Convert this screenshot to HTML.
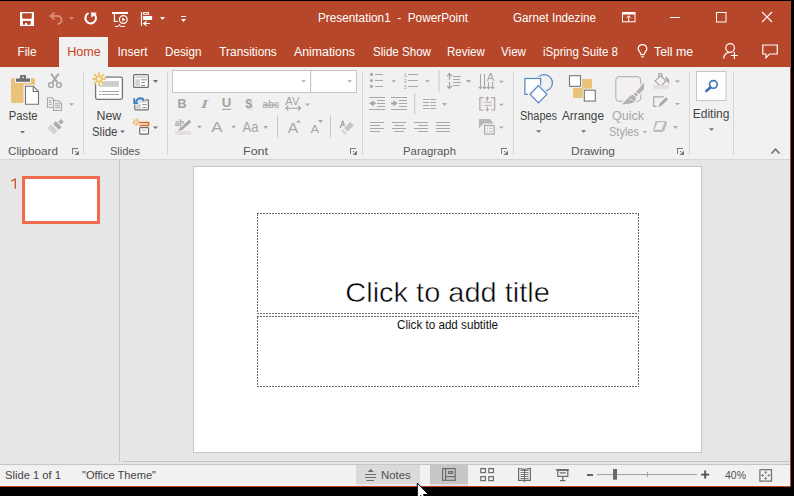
<!DOCTYPE html>
<html><head><meta charset="utf-8">
<style>
*{margin:0;padding:0}
html,body{width:794px;height:496px;overflow:hidden;background:#000}
svg{position:absolute;left:0;top:0;font-family:"Liberation Sans",sans-serif}
.w{fill:#fff}
.lab{fill:#444}
.dis{fill:#A6A6A6}
</style></head><body>
<svg width="794" height="496" viewBox="0 0 794 496">
<!-- frame -->
<rect x="0" y="0" width="794" height="496" fill="#000"/>
<rect x="0" y="1" width="791" height="486" fill="#B7472A"/>
<!-- ribbon -->
<rect x="0" y="67" width="790" height="92" fill="#F1F1F1"/>
<rect x="0" y="159" width="790" height="1" fill="#D5D5D5"/>
<!-- main -->
<rect x="0" y="160" width="790" height="304" fill="#E6E6E6"/>
<rect x="0" y="464" width="790" height="1" fill="#C6C6C6"/>
<rect x="0" y="465" width="790" height="21" fill="#F1F1F1"/>

<!-- ===== TITLE BAR ===== -->
<g id="titlebar">
<text x="318" y="22" font-size="12.5" class="w" xml:space="preserve" textLength="150" lengthAdjust="spacingAndGlyphs">Presentation1  -  PowerPoint</text>
<text x="513" y="22" font-size="12.5" class="w" textLength="83" lengthAdjust="spacingAndGlyphs">Garnet Indezine</text>
</g>

<g id="qat">
<rect x="20" y="12" width="14" height="14" fill="#fff"/>
<path d="M22.2 13.3H31.8V18L31 18.7H23L22.2 18Z" fill="#B7472A"/>
<rect x="22.9" y="20.9" width="7.8" height="3.8" fill="#B7472A"/>
<rect x="25" y="23" width="2" height="2" fill="#fff"/>
<g fill="none" stroke="#D98A74" stroke-width="2">
<path d="M50.5 16H57.5A4 4 0 0 1 57.5 24"/>
<path d="M54.6 12.4L50.5 16L54.6 19.6"/>
</g>
<path d="M69 17H74L71.5 20Z" fill="#D98A74"/>
<path d="M88.6 13.2A5.3 5.3 0 1 0 94.6 14.5" fill="none" stroke="#fff" stroke-width="2"/>
<path d="M91 12.2L96.9 12.8L91.5 17.8Z" fill="#fff"/>
<rect x="112" y="12" width="16" height="2" fill="#fff"/>
<rect x="113.8" y="13.8" width="1.3" height="8" fill="#fff"/>
<rect x="113.8" y="20.8" width="4" height="1.2" fill="#fff"/>
<circle cx="123.3" cy="19.5" r="3.9" fill="none" stroke="#fff" stroke-width="1.2"/>
<path d="M122.2 17.4V21.4L125.5 19.4Z" fill="#fff"/>
<path d="M115 26.4H118.5L119.5 24.5L120.5 26.4H125" fill="none" stroke="#fff" stroke-width="1"/>
<rect x="140.9" y="12" width="1.2" height="14" fill="#fff"/>
<rect x="143.6" y="12.6" width="5" height="1.7" fill="none" stroke="#fff" stroke-width="1"/>
<rect x="143.1" y="16" width="9" height="4" fill="#fff"/>
<path d="M146.6 21.3L143.6 23.5L146.6 25.7M143.6 23.5H150" fill="none" stroke="#fff" stroke-width="1.1"/>
<path d="M160 17H165L162.5 20Z" fill="#fff"/>
<rect x="181" y="16" width="5" height="1" fill="#fff"/>
<path d="M181 19H186L183.5 22Z" fill="#fff"/>
</g>
<g id="winctl">
<rect x="622.5" y="12.5" width="12.5" height="9.3" fill="none" stroke="#fff" stroke-width="1"/>
<rect x="622" y="13" width="13" height="1.5" fill="#fff"/>
<path d="M628.7 21.8V15.8M626.6 17.9L628.7 15.8L630.8 17.9" fill="none" stroke="#fff" stroke-width="1"/>
<rect x="670" y="17" width="10" height="1" fill="#fff"/>
<rect x="716.5" y="12.5" width="9.5" height="9.5" fill="none" stroke="#fff" stroke-width="1"/>
<path d="M762 12L772 22M772 12L762 22" stroke="#fff" stroke-width="1.1"/>
<circle cx="730.1" cy="48" r="4.3" fill="none" stroke="#fff" stroke-width="1.2"/>
<path d="M723.5 58.5C724 55 726.5 52.8 729.5 52.4" fill="none" stroke="#fff" stroke-width="1.2"/>
<path d="M734.4 52V59M730.9 55.5H737.9" stroke="#fff" stroke-width="1.2"/>
<path d="M762.8 45H777.3V54H769.5L766 57.8V54H762.8Z" fill="none" stroke="#fff" stroke-width="1.2"/>
<path d="M642.5 44.5C640 44.5 638.2 46.4 638.2 48.8C638.2 51 640.5 52 641 54.5H644C644.5 52 646.8 51 646.8 48.8C646.8 46.4 645 44.5 642.5 44.5Z" fill="none" stroke="#fff" stroke-width="1.25"/>
<rect x="641" y="56.3" width="3" height="1" fill="#fff"/>
</g>
<!-- ===== TABS ===== -->
<rect x="59" y="37" width="49" height="30" fill="#F1F1F1"/>
<g font-size="12.5" class="w">
<text x="17.5" y="56" textLength="19" lengthAdjust="spacingAndGlyphs">File</text>
<text x="67.2" y="56" textLength="33.6" lengthAdjust="spacingAndGlyphs" fill="#C8431F">Home</text>
<text x="117.5" y="56" textLength="30" lengthAdjust="spacingAndGlyphs">Insert</text>
<text x="165" y="56" textLength="36.5" lengthAdjust="spacingAndGlyphs">Design</text>
<text x="219.3" y="56" textLength="57.5" lengthAdjust="spacingAndGlyphs">Transitions</text>
<text x="294" y="56" textLength="61" lengthAdjust="spacingAndGlyphs">Animations</text>
<text x="373" y="56" textLength="58" lengthAdjust="spacingAndGlyphs">Slide Show</text>
<text x="447" y="56" textLength="37.8" lengthAdjust="spacingAndGlyphs">Review</text>
<text x="501" y="56" textLength="25" lengthAdjust="spacingAndGlyphs">View</text>
<text x="543" y="56" textLength="75" lengthAdjust="spacingAndGlyphs">iSpring Suite 8</text>
<text x="654" y="56" textLength="39" lengthAdjust="spacingAndGlyphs">Tell me</text>
</g>

<!-- RIB1 -->
<g id="rib-sep" fill="#D5D5D5">
<rect x="83" y="72" width="1" height="83"/>
<rect x="167" y="72" width="1" height="83"/>
<rect x="362" y="72" width="1" height="83"/>
<rect x="513" y="72" width="1" height="83"/>
<rect x="689" y="72" width="1" height="83"/>
<rect x="733" y="72" width="1" height="83"/>
</g>
<g id="clipboard">
<rect x="11" y="78" width="24" height="25" rx="1.8" fill="#EAC27A"/>
<rect x="15" y="77.5" width="16" height="5.5" fill="#F1F1F1"/>
<rect x="16" y="78.5" width="14" height="3.3" fill="#6E6E6E"/>
<rect x="20" y="75" width="6" height="4" rx="1" fill="#6E6E6E"/>
<circle cx="23" cy="77.3" r="0.9" fill="#F1F1F1"/>
<path d="M23.5 84.5H34L40.5 91V106H23.5Z" fill="#F1F1F1"/>
<path d="M25.5 86.2H33.2L38.5 91.5V104.3H25.5Z" fill="#fff" stroke="#707070" stroke-width="1.1"/>
<path d="M33.2 86.2V91.5H38.5" fill="none" stroke="#707070" stroke-width="1.1"/>
<path d="M20 131H25L22.5 133.5Z" fill="#6E6E6E"/>
<g fill="none" stroke="#A8A8A8" stroke-width="1.5">
<path d="M51.2 73.6L57.3 82.4M58.6 73.6L52.5 82.4" stroke-width="1.9"/>
<circle cx="51" cy="85.1" r="2.4"/>
<circle cx="58.9" cy="85.1" r="2.4"/>
</g>
<g stroke="#A8A8A8" stroke-width="1.1">
<path d="M47.5 97.8H52L54 99.8V107.3H47.5Z" fill="#F3EEF2"/>
<path d="M53.5 100.8H58.8L61.5 103.5V110.5H53.5Z" fill="#F3EEF2"/>
<path d="M49 100.5H51.5M49 102.5H51.5M49 104.5H51.5M55 103.8H60M55 105.8H60M55 107.8H60" fill="none"/>
</g>
<path d="M69 103.3H74L71.5 105.8Z" fill="#A8A8A8"/>
<path d="M63.8 121.7L61.1 119.0L58.2 121.9L60.9 124.6Z" fill="#ABABAB"/>
<path d="M61.5 127.0L55.8 121.3L53.1 124.0L58.8 129.7Z" fill="#ABABAB"/>
<path d="M57.5 130.7L51.0 124.2L47.3 127.9L53.8 134.4Z" fill="#D6D2D5"/>
</g>
<g id="slides">
<rect x="95.6" y="77.2" width="26.8" height="22.2" rx="1.8" fill="#fff" stroke="#757575" stroke-width="1.3"/>
<rect x="99" y="81" width="20" height="5.8" fill="#CDCDCD"/>
<path d="M99 91.5H101M102 91.5H119M99 94.5H101M102 94.5H119" stroke="#A3A3A3" stroke-width="1"/>
<circle cx="99" cy="79" r="6.5" fill="#F1F1F1"/>
<g stroke="#EDC56B" stroke-width="2" stroke-linecap="round">
<path d="M99 73V76.5M99 81.5V85M93 79H96.5M101.5 79H105M94.8 74.8L97.2 77.2M100.8 80.8L103.2 83.2M103.2 74.8L100.8 77.2M97.2 80.8L94.8 83.2"/>
</g>
<path d="M120 130.4H125L122.5 132.9Z" fill="#6E6E6E"/>
<rect x="133.6" y="74.6" width="14.8" height="12.8" rx="1" fill="#fff" stroke="#6F6F6F" stroke-width="1.2"/>
<rect x="135.3" y="76.3" width="11.4" height="1.6" fill="#CFCFCF"/>
<rect x="135.3" y="79.3" width="4.5" height="6.6" fill="#D0D0D0"/>
<path d="M141.1 79.8H147M141.1 82.6H145M141.1 85.4H145" stroke="#8A8A8A" stroke-width="1"/>
<path d="M153 80H158L155.5 83Z" fill="#6F6F6F"/>
<rect x="134.8" y="99.9" width="13.6" height="10" rx="0.8" fill="#fff" stroke="#6F6F6F" stroke-width="1.2"/>
<rect x="139.3" y="101.1" width="7.4" height="1.6" fill="#D5D5D5"/>
<rect x="136.2" y="104.2" width="4.7" height="4.5" fill="#D0D0D0"/>
<path d="M142.2 104.6H146.7M142.2 107.7H146.7" stroke="#8A8A8A" stroke-width="1"/>
<path d="M143.8 101C143 97.3 137.8 97.2 135.8 102" fill="none" stroke="#F1F1F1" stroke-width="4"/>
<path d="M132.6 97.6H135.8V101.6H138.8V104.6H132.6Z" fill="#F1F1F1"/>
<path d="M143.8 101C143 97.3 137.8 97.2 135.8 102" fill="none" stroke="#3D7DC8" stroke-width="2"/>
<path d="M133.3 98.2H135.1V102.2H138.2V104H133.3Z" fill="#3D7DC8"/>
<g stroke="#F0A030" stroke-width="1" stroke-linecap="round">
<path d="M136.2 118.8V120.8M136.2 123.6V125.6M132.8 122.2H134.8M137.6 122.2H139.6M133.8 119.8L135 121M137.4 123.4L138.6 124.6M138.6 119.8L137.4 121M135 123.4L133.8 124.6"/>
</g>
<path d="M139.5 122.5H148.5V125.5H139.5" fill="none" stroke="#E06A24" stroke-width="1.6"/>
<rect x="139.7" y="127.6" width="8.8" height="6.6" rx="0.8" fill="#fff" stroke="#6F6F6F" stroke-width="1.2"/>
<rect x="142" y="129.5" width="4.2" height="1.5" fill="#CFCFCF"/>
<path d="M153 126.4H158L155.5 129Z" fill="#6F6F6F"/>
</g>
<!-- /RIB1 -->
<!-- RIB2 -->
<g id="font">
<rect x="172.5" y="70.5" width="184" height="22" fill="#fff" stroke="#C6C6C6" stroke-width="1"/>
<rect x="310" y="71" width="1.2" height="21" fill="#C6C6C6"/>
<path d="M301.4 80.2H306L303.7 82.4Z" fill="#A8A8A8"/>
<path d="M347.3 80.2H352L349.6 82.4Z" fill="#A8A8A8"/>
<g fill="#A3A3A3">
<text x="177.5" y="107.7" font-size="12" font-weight="bold" textLength="9" lengthAdjust="spacingAndGlyphs">B</text>
<text x="200" y="107.7" font-size="12.5" font-family="Liberation Serif" font-style="italic" textLength="8.5" lengthAdjust="spacingAndGlyphs">I</text>
<text x="221.8" y="107" font-size="12" font-weight="bold" textLength="9.5" lengthAdjust="spacingAndGlyphs">U</text>
<rect x="222" y="108.8" width="9" height="1.1"/>
<text x="246.5" y="109.5" font-size="13.5" font-weight="bold" fill="#DCDCDC" textLength="7" lengthAdjust="spacingAndGlyphs">S</text>
<text x="245.2" y="108.3" font-size="13.5" font-weight="bold" fill="#999" textLength="7" lengthAdjust="spacingAndGlyphs">S</text>
<text x="262.5" y="107.8" font-size="10" textLength="16.5" lengthAdjust="spacingAndGlyphs">abc</text>
<rect x="263" y="104.6" width="16" height="1"/>
<text x="285.3" y="104.5" font-size="10.5" textLength="14" lengthAdjust="spacingAndGlyphs">AV</text>
</g>
<path d="M285.8 108.3H300.6M288.2 106L285.8 108.3L288.2 110.6M298.2 106L300.6 108.3L298.2 110.6" fill="none" stroke="#A3A3A3" stroke-width="1.1"/>
<path d="M305.1 103.4H310L307.5 106Z" fill="#A8A8A8"/>
<!-- row 3 -->
<text x="174.8" y="125.6" font-size="9.5" font-weight="bold" fill="#A3A3A3" textLength="9.6" lengthAdjust="spacingAndGlyphs">ab</text>
<path d="M190.2 120.9L180 130" stroke="#F1F1F1" stroke-width="5"/>
<path d="M190.2 120.9L182.2 128" stroke="#A8A8A8" stroke-width="2.8"/>
<path d="M180.6 126.6L183.6 129.4L178.2 131.1Z" fill="#A8A8A8"/>
<rect x="175" y="131.1" width="16" height="3.8" fill="#E4DDE2"/>
<path d="M196.9 125.8H201.9L199.4 128.6Z" fill="#A8A8A8"/>
<text x="211.2" y="132.2" font-size="15.5" fill="#A6A6A6" textLength="11.3" lengthAdjust="spacingAndGlyphs">A</text>
<path d="M231.2 125.8H236L233.6 128.6Z" fill="#A8A8A8"/>
<text x="242.6" y="132.2" font-size="14.5" fill="#A6A6A6" textLength="16" lengthAdjust="spacingAndGlyphs">Aa</text>
<path d="M263.3 126H268L265.6 129Z" fill="#A8A8A8"/>
<rect x="277" y="116" width="1" height="21.6" fill="#C6C6C6"/>
<text x="287.8" y="133.1" font-size="14" fill="#A6A6A6" textLength="10.5" lengthAdjust="spacingAndGlyphs">A</text>
<path d="M296 122.4H301.1L298.5 120Z" fill="#A8A8A8"/>
<text x="310.5" y="133.1" font-size="11" fill="#A6A6A6" textLength="8.5" lengthAdjust="spacingAndGlyphs">A</text>
<path d="M318 120H323L320.5 123Z" fill="#A8A8A8"/>
<rect x="330" y="116" width="1" height="21.6" fill="#C6C6C6"/>
<path d="M340.2 128L342.7 120.6L345.2 128M341.2 125.2H344.2" fill="none" stroke="#A3A3A3" stroke-width="1.3" stroke-linejoin="bevel"/>
<path d="M344.2 127.9L350.3 122.1L353.8 125.5L347.6 131.6Z M343 129.1L346.4 132.8L344.8 134.4L341.4 130.7Z" fill="#F1F1F1" stroke="#F1F1F1" stroke-width="2.4" stroke-linejoin="round"/>
<path d="M344.2 127.9L350.3 122.1L353.8 125.5L347.6 131.6Z" fill="#C4C4C4"/>
<path d="M343 129.1L346.4 132.8L344.8 134.4L341.4 130.7Z" fill="#D2D2D2"/>
</g>
<g id="para">
<g fill="#A8A8A8">
<circle cx="371.5" cy="74.4" r="1.6"/><circle cx="371.5" cy="80.5" r="1.6"/><circle cx="371.5" cy="86.4" r="1.6"/>
<rect x="375" y="74" width="8" height="1"/><rect x="375" y="80" width="8" height="1"/><rect x="375" y="86" width="8" height="1"/>
<path d="M391.4 80.2H396.1L393.7 82.6Z"/>
<text x="403.6" y="77.2" font-size="5" textLength="3.4" lengthAdjust="spacingAndGlyphs">1</text>
<text x="403.6" y="83" font-size="5" textLength="3.4" lengthAdjust="spacingAndGlyphs">2</text>
<text x="403.6" y="88.8" font-size="5" textLength="3.4" lengthAdjust="spacingAndGlyphs">3</text>
<rect x="408" y="74" width="10" height="1"/><rect x="408" y="80" width="10" height="1"/><rect x="408" y="86" width="10" height="1"/>
<path d="M425 80.2H429.9L427.4 82.6Z"/>
<rect x="438.5" y="70.2" width="1" height="21.4" fill="#C6C6C6"/>
<!-- indent -->
<rect x="369" y="97" width="16" height="1"/><rect x="369" y="109" width="16" height="1"/>
<rect x="377" y="100" width="8" height="1"/><rect x="377" y="103" width="8" height="1"/><rect x="377" y="106" width="8" height="1"/>
<path d="M373.6 100.2L369.1 103.35L373.6 106.5Z"/><rect x="372" y="102.4" width="3.8" height="1.9"/>
<rect x="391" y="97" width="16" height="1"/><rect x="391" y="109" width="16" height="1"/>
<rect x="399" y="100" width="8" height="1"/><rect x="399" y="103" width="8" height="1"/><rect x="399" y="106" width="8" height="1"/>
<path d="M393.3 100.2L397.8 103.35L393.3 106.5Z"/><rect x="391" y="102.4" width="3.8" height="1.9"/>
<rect x="414.2" y="93.5" width="1" height="20.8" fill="#C6C6C6"/>
<!-- columns -->
<rect x="423" y="99" width="6" height="1"/><rect x="423" y="102" width="6" height="1"/><rect x="423" y="105" width="6" height="1"/><rect x="423" y="108" width="6" height="1"/>
<rect x="430" y="99" width="6" height="1"/><rect x="430" y="102" width="6" height="1"/><rect x="430" y="105" width="6" height="1"/><rect x="430" y="108" width="6" height="1"/>
<path d="M442 103.1H447L444.5 105.9Z"/>
<!-- align -->
<rect x="370" y="122" width="14" height="1"/><rect x="370" y="125" width="10" height="1"/><rect x="370" y="128" width="14" height="1"/><rect x="370" y="131" width="10" height="1"/>
<rect x="392" y="122" width="14" height="1"/><rect x="394" y="125" width="10" height="1"/><rect x="392" y="128" width="14" height="1"/><rect x="394" y="131" width="10" height="1"/>
<rect x="414" y="122" width="14" height="1"/><rect x="418" y="125" width="10" height="1"/><rect x="414" y="128" width="14" height="1"/><rect x="418" y="131" width="10" height="1"/>
<rect x="436" y="122" width="14" height="1"/><rect x="436" y="125" width="14" height="1"/><rect x="436" y="128" width="14" height="1"/><rect x="436" y="131" width="14" height="1"/>
<!-- line spacing -->
<path d="M449.5 74.5V79.8M449.5 82V88.2M447.1 76.3L449.5 73.6L451.9 76.3M447.1 85.9L449.5 88.6L451.9 85.9" fill="none" stroke="#A8A8A8" stroke-width="1.3"/>
<rect x="453" y="76" width="8" height="1"/><rect x="453" y="79" width="7" height="1"/><rect x="453" y="82" width="8" height="1"/><rect x="453" y="85" width="7" height="1"/>
<path d="M466 80H471.1L468.5 83.1Z"/>
<!-- text direction -->
<path d="M480.5 74V88M484.5 74V88M488.5 82V88M492.6 82V88M478.8 86.8L480.5 88.6L482.2 86.8M482.8 86.8L484.5 88.6L486.2 86.8M486.8 86.8L488.5 88.6L490.2 86.8M490.9 86.8L492.6 88.6L494.3 86.8" fill="none" stroke="#A8A8A8" stroke-width="1.1"/>
<text x="486.8" y="80.6" font-size="10.5" textLength="7.6" lengthAdjust="spacingAndGlyphs">A</text>
<path d="M499 80.8H503.9L501.4 83Z"/>
<!-- align text -->
<rect x="480" y="97.6" width="14.2" height="12.4" fill="#F3EEF2"/>
<path d="M483.6 97.6H479.9V110H483.6M491 97.6H494.6V110H491" fill="none" stroke="#A8A8A8" stroke-width="1.2"/>
<path d="M487.3 98.5V101.2M487.3 106.6V109.3" stroke="#A8A8A8" stroke-width="1.2"/>
<path d="M485.1 98.8L487.3 96.2L489.5 98.8ZM485.1 109L487.3 111.6L489.5 109Z" fill="#A8A8A8"/>
<path d="M482 102.4H483M484.3 102.4H491.9M482 105.4H483M484.3 105.4H491.9" stroke="#BFB5BD" stroke-width="1"/>
<path d="M499 103.8H503.9L501.4 106Z"/>
<!-- smartart -->
<path d="M478.9 119.1H490L493.8 123.5H483.6L478.9 128.6Z" fill="#B8B8B8"/>
<rect x="484.6" y="125.5" width="9.6" height="8.6" fill="#F3EEF2" stroke="#A8A8A8" stroke-width="1.2"/>
<path d="M487 128.3H488M489.4 128.3H492.5M487 131.4H488M489.4 131.4H492.5" stroke="#BDB3BB" stroke-width="1"/>
<path d="M499 126.4H503.9L501.4 128.8Z"/>
</g>
</g>
<!-- /RIB2 -->
<!-- RIB3 -->
<g id="drawing">
<circle cx="544.2" cy="82.9" r="8.2" fill="none" stroke="#4F83C2" stroke-width="1.2"/>
<rect x="524.9" y="78.5" width="15.7" height="15.8" fill="#fff" stroke="#F1F1F1" stroke-width="3.6"/>
<rect x="524.9" y="78.5" width="15.7" height="15.8" fill="#fff" stroke="#4F83C2" stroke-width="1.2"/>
<path d="M538.5 85.7L546.9 94.3L538.5 102.9L530.1 94.3Z" fill="#fff" stroke="#F1F1F1" stroke-width="3.6"/>
<path d="M538.5 85.7L546.9 94.3L538.5 102.9L530.1 94.3Z" fill="#fff" stroke="#4F83C2" stroke-width="1.2"/>
<path d="M536 130.2H541.4L538.7 132.8Z" fill="#6E6E6E"/>
<rect x="573" y="79" width="19" height="19" fill="#EAC27A"/>
<rect x="569.5" y="75.7" width="11" height="10.6" fill="#fff" stroke="#F1F1F1" stroke-width="3.2"/>
<rect x="569.5" y="75.7" width="11" height="10.6" fill="#fff" stroke="#747474" stroke-width="1.1"/>
<rect x="584.3" y="90.2" width="11" height="10.9" fill="#fff" stroke="#F1F1F1" stroke-width="3.2"/>
<rect x="584.3" y="90.2" width="11" height="10.9" fill="#fff" stroke="#747474" stroke-width="1.1"/>
<path d="M581.1 130.2H586.2L583.6 132.8Z" fill="#6E6E6E"/>
<rect x="615.8" y="76.6" width="25" height="24.8" rx="4" fill="#F4EFF3" stroke="#B5B5B5" stroke-width="1.2"/>
<g fill="#F1F1F1" stroke="#F1F1F1" stroke-width="3" stroke-linejoin="round">
<path d="M644 82.8L644 89.2L638.8 94.2L636.2 91.6Z"/>
<path d="M638.1 94.9L635.5 92.3L633.7 94.1L636.3 96.7Z"/>
<path d="M636 97.8Q635.8 102.6 630.5 103.6L621.8 104.4L628.5 97.5Q631.3 94.6 633.3 95.1Z"/>
</g>
<g fill="#B2B2B2">
<path d="M644 82.8L644 89.2L638.8 94.2L636.2 91.6Z"/>
<path d="M638.1 94.9L635.5 92.3L633.7 94.1L636.3 96.7Z"/>
<path d="M636 97.8Q635.8 102.6 630.5 103.6L621.8 104.4L628.5 97.5Q631.3 94.6 633.3 95.1Z"/>
</g>
<path d="M629.5 99.6Q631.5 99 632.6 101" fill="none" stroke="#F4EFF3" stroke-width="1"/>
<path d="M642.6 131H647L644.8 133.3Z" fill="#A8A8A8"/>
<path d="M660.5 75.5L666 81L660.5 86.5L655 81Z" fill="#F3EEF2" stroke="#A8A8A8" stroke-width="1.2"/>
<path d="M658.6 78V74.2Q660.3 72.6 662 74.2V78" fill="none" stroke="#A8A8A8" stroke-width="1.1"/>
<path d="M665 77C668 77 669.5 79 669.2 84L667 81.5Z" fill="#A8A8A8"/>
<rect x="653.1" y="85.2" width="16" height="3.7" fill="#E5DFE3"/>
<path d="M674.8 80.4H680.2L677.5 82.8Z" fill="#A8A8A8"/>
<path d="M663.7 96.8H653.7V106.4H656.6" fill="none" stroke="#A8A8A8" stroke-width="1.2"/>
<path d="M667.3 98L658.8 106.4" stroke="#F1F1F1" stroke-width="4.5"/>
<path d="M667 98.3L660.2 105.1" stroke="#A8A8A8" stroke-width="2.8"/>
<path d="M659.3 104.2L658.3 107L661.1 106Z" fill="#A8A8A8"/>
<path d="M674.8 103H680.2L677.5 105.3Z" fill="#A8A8A8"/>
<path d="M656.5 121H665Q667.4 121 666.8 123.5L664.4 130.2Q663.9 131.9 662 131.9H655Q652.9 131.9 653.3 130L655.1 122.6Q655.5 121 656.5 121Z" fill="#BBBBBB"/>
<path d="M657.4 122.3H664.6L661.4 129.7H654.4Z" fill="#F6F1F5"/>
<path d="M661.4 129.7L663.5 131.7" stroke="#EDE8EC" stroke-width="0.8"/>
<path d="M673 125.9H678L675.5 128.9Z" fill="#A8A8A8"/>
</g>
<g id="editing">
<rect x="696.5" y="71.5" width="29.5" height="29" fill="#FDFDFD" stroke="#C6C6C6" stroke-width="1"/>
<circle cx="713.4" cy="84.4" r="3.8" fill="none" stroke="#3D74B6" stroke-width="1.6"/>
<path d="M710.4 87.4L706.3 91" stroke="#3D74B6" stroke-width="2.6" stroke-linecap="round"/>
<path d="M709 128.2H714L711.5 130.8Z" fill="#6E6E6E"/>
<path d="M771.5 153.5L775.5 149.2L779.5 153.5" fill="none" stroke="#6E6E6E" stroke-width="1.6"/>
</g>
<g id="launchers" fill="#7A7A7A">
<rect x="72" y="148" width="6" height="1"/><rect x="72" y="148" width="1" height="6"/><path d="M79 150.6V155H74.6Z"/><rect x="75" y="151" width="1.2" height="1.2"/>
<rect x="350" y="148" width="6" height="1"/><rect x="350" y="148" width="1" height="6"/><path d="M357 150.6V155H352.6Z"/><rect x="353" y="151" width="1.2" height="1.2"/>
<rect x="501" y="148" width="6" height="1"/><rect x="501" y="148" width="1" height="6"/><path d="M508 150.6V155H503.6Z"/><rect x="504" y="151" width="1.2" height="1.2"/>
<rect x="677" y="148" width="6" height="1"/><rect x="677" y="148" width="1" height="6"/><path d="M684 150.6V155H679.6Z"/><rect x="680" y="151" width="1.2" height="1.2"/>
</g>
<!-- /RIB3 -->
<!-- ===== RIBBON LABELS ===== -->
<g font-size="11" fill="#575757">
<text x="8" y="155" textLength="50" lengthAdjust="spacingAndGlyphs">Clipboard</text>
<text x="110" y="155" textLength="30" lengthAdjust="spacingAndGlyphs">Slides</text>
<text x="243" y="155" textLength="25" lengthAdjust="spacingAndGlyphs">Font</text>
<text x="403" y="155" textLength="53" lengthAdjust="spacingAndGlyphs">Paragraph</text>
<text x="571" y="155" textLength="44" lengthAdjust="spacingAndGlyphs">Drawing</text>
</g>
<g font-size="12" class="lab">
<text x="8.8" y="120" textLength="28.7" lengthAdjust="spacingAndGlyphs">Paste</text>
<text x="96.5" y="119.5" textLength="24.8" lengthAdjust="spacingAndGlyphs">New</text>
<text x="92" y="136" textLength="25.4" lengthAdjust="spacingAndGlyphs">Slide</text>
<text x="520" y="120" textLength="37" lengthAdjust="spacingAndGlyphs">Shapes</text>
<text x="562" y="120" textLength="42" lengthAdjust="spacingAndGlyphs">Arrange</text>
<text x="612" y="120" textLength="32" lengthAdjust="spacingAndGlyphs" fill="#A6A6A6">Quick</text>
<text x="609" y="136" textLength="30" lengthAdjust="spacingAndGlyphs" fill="#A6A6A6">Styles</text>
<text x="692.7" y="118" textLength="36.8" lengthAdjust="spacingAndGlyphs">Editing</text>
</g>

<!-- ===== SLIDE PANE ===== -->
<rect x="119" y="160" width="1" height="302" fill="#C6C6C6"/>
<rect x="122" y="461" width="668" height="1" fill="#C6C6C6"/>
<path d="M15.3 178.6V188.8M15.3 178.8L11.3 181.3" fill="none" stroke="#C8502F" stroke-width="1.3"/>
<rect x="23.5" y="177.5" width="75" height="45" fill="#fff" stroke="#EE6C4D" stroke-width="3"/>

<!-- ===== SLIDE ===== -->
<rect x="193.5" y="166.5" width="508" height="286" fill="#fff" stroke="#C6C6C6" stroke-width="1"/>
<g fill="none" stroke="#6A6A6A" stroke-width="1" stroke-dasharray="2 1" shape-rendering="crispEdges">
<path d="M257 213.5H639M257 313.5H639M257.5 214V313M638.5 214V313"/>
<path d="M257 316.5H639M257 386.5H639M257.5 317V386M638.5 317V386"/>
</g>
<text x="345.3" y="302" font-size="28" fill="#000" stroke="#fff" stroke-width="0.5" textLength="204.5" lengthAdjust="spacingAndGlyphs">Click to add title</text>
<text x="397" y="329" font-size="12" fill="#111" textLength="101" lengthAdjust="spacingAndGlyphs">Click to add subtitle</text>

<!-- ===== STATUS BAR ===== -->
<g font-size="11" fill="#444">
<text x="5" y="479" textLength="56" lengthAdjust="spacingAndGlyphs">Slide 1 of 1</text>
<text x="82" y="479" textLength="74" lengthAdjust="spacingAndGlyphs">"Office Theme"</text>
</g>
<rect x="356" y="465" width="64" height="21" fill="#DADADA"/>
<rect x="430" y="465" width="38" height="21" fill="#C6C6C6"/>
<text x="381" y="479" font-size="11" fill="#505050" textLength="29.8" lengthAdjust="spacingAndGlyphs">Notes</text>
<text x="725" y="479" font-size="11" fill="#505050" textLength="21" lengthAdjust="spacingAndGlyphs">40%</text>
<!-- STATUS -->
<g id="statusicons">
<g fill="#6D6D6D">
<path d="M367.6 472L370.7 469L373.8 472Z"/>
<rect x="365" y="474" width="11" height="1"/>
<rect x="365" y="477" width="11" height="1"/>
<rect x="366.5" y="480" width="7.5" height="1"/>
</g>
<g fill="none" stroke="#6D6D6D" stroke-width="1.2">
<rect x="442.6" y="468.6" width="12.6" height="11.7"/>
<path d="M445.6 468.6V480.3M445.6 476.6H455.2"/>
<rect x="448.6" y="471.6" width="4" height="1.8"/>
<rect x="480.8" y="468.6" width="4.6" height="4"/>
<rect x="488.8" y="468.6" width="4.6" height="4"/>
<rect x="480.8" y="476.6" width="4.6" height="4"/>
<rect x="488.8" y="476.6" width="4.6" height="4"/>
<path d="M518.6 468.5L524.5 469.3L530.4 468.5V480.3H525.5L524.5 481.3L523.5 480.3H518.6Z"/>
<path d="M524.5 469.5V480.5" stroke-width="1"/>
<path d="M520.5 470.5H528.5M520.5 472.5H528.5M520.5 474.5H528.5M520.5 476.5H528.5M520.5 478.5H528.5" stroke-width="0.9"/>
<rect x="557.8" y="470.4" width="10" height="6"/>
<path d="M559.8 472.8H565.8M562.8 476.4V480.6M560 480.6H565.5"/>
<rect x="759.9" y="469.7" width="11.6" height="11.4"/>
</g>
<rect x="556.1" y="469" width="12.8" height="1.8" fill="#6D6D6D"/>
<path d="M765.7 471.5V474M764.5 472.7L765.7 471.5L766.9 472.7M765.7 476.8V479.3M764.5 478.1L765.7 479.3L766.9 478.1M761.5 475.4H764M762.7 474.2L761.5 475.4L762.7 476.6M767.4 475.4H769.9M768.7 474.2L769.9 475.4L768.7 476.6" fill="none" stroke="#6D6D6D" stroke-width="0.9"/>
<rect x="587" y="474.1" width="6" height="1.8" fill="#505050"/>
<rect x="597" y="474" width="100" height="1.1" fill="#A6A6A6"/>
<rect x="647" y="472" width="1" height="5" fill="#A6A6A6"/>
<rect x="613" y="469" width="4" height="10.7" fill="#6A6A6A"/>
<path d="M705.2 470.6V478.6M701.1 474.6H709.2" stroke="#505050" stroke-width="1.9"/>
</g>
<path d="M0 485H790" stroke="#F6FAFC" stroke-width="1"/>
<rect x="0" y="486" width="791" height="1" fill="#C0451F"/>
<rect x="790" y="1" width="1" height="486" fill="#B7472A"/>
<rect x="0" y="487" width="794" height="9" fill="#000"/>
<rect x="791" y="0" width="3" height="496" fill="#000"/>
<path d="M417.3 483.1V499L421 495.5L424 501L426 500L423.5 494.5H428.5Z" fill="#fff" stroke="#000" stroke-width="1"/>
<!-- /STATUS -->
</svg>
</body></html>
